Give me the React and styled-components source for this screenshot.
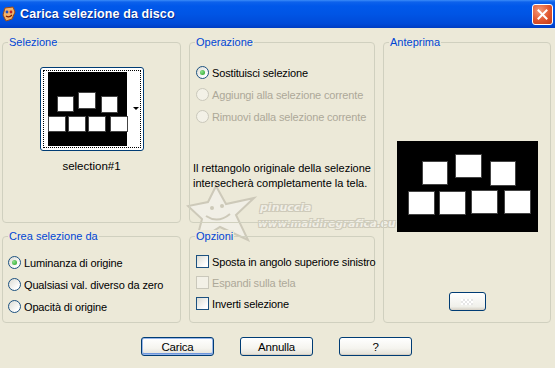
import styled, { createGlobalStyle } from 'styled-components'

const GlobalStyle = createGlobalStyle`
  html, body {
    margin: 0;
    padding: 0;
    background: #ece9d8;
  }
  body {
    font-family: "Liberation Sans", Arial, sans-serif;
    font-size: 11px;
    color: #000;
  }
`

const Window = styled.div`
  position: relative;
  width: 555px;
  height: 368px;
  background: #ece9d8;
  overflow: hidden;
  display: flex;
  flex-direction: column;
`

const TitleBar = styled.div`
  height: 28px;
  flex: none;
  display: flex;
  align-items: center;
  padding: 0 2px 0 2px;
  box-sizing: border-box;
  background: linear-gradient(#3b8cf8 0, #0d62ec 2px, #0058ea 6px, #0055e5 50%, #004ad8 85%, #003dc2 100%);
`

const TitleText = styled.span`
  flex: 1;
  margin-left: 4px;
  color: #fff;
  font-family: "Liberation Sans", Arial, sans-serif;
  font-weight: bold;
  font-size: 12.5px;
  letter-spacing: 0.1px;
  text-shadow: 1px 1px 0 #0a2a8a;
`

const CloseButton = styled.div`
  width: 21px;
  height: 21px;
  box-sizing: border-box;
  border: 1px solid #fff;
  border-radius: 3px;
  background: radial-gradient(circle at 35% 30%, #f39a7a 0, #e0562e 55%, #c23a16 100%);
  display: flex;
  align-items: center;
  justify-content: center;
  margin-top: 1px;
`

const Body = styled.div`
  position: relative;
  z-index: 1;
  display: grid;
  grid-template-columns: 179px 186px 168px;
  grid-template-rows: 187px 93px;
  column-gap: 8px;
  row-gap: 7px;
  padding: 8px 0 0 2px;
`

const Group = styled.fieldset`
  margin: 0;
  padding: 0;
  min-width: 0;
  border: 1px solid #d0d0bf;
  border-radius: 4px;
  box-sizing: border-box;
  grid-row: ${p => p.$span ? '1 / span 2' : 'auto'};
  grid-column: ${p => p.$col || 'auto'};
  display: flex;
  flex-direction: column;
  align-items: ${p => p.$center ? 'center' : 'stretch'};
`

const Legend = styled.legend`
  color: #0046d5;
  background: #ece9d8;
  padding: 0 1px;
  margin-left: 5px;
  font-size: 11px;
  line-height: 13px;
`

const ThumbButton = styled.div`
  position: relative;
  margin-top: 18px;
  width: 104px;
  height: 84px;
  box-sizing: border-box;
  border: 1px solid #003c74;
  border-radius: 3px;
  background: #fff;
  padding: 2px;
  display: flex;
`

const FocusRect = styled.div`
  flex: 1;
  border: 1px dotted #000;
  display: flex;
  padding: 1px 0 1px 4px;
`

const ThumbImage = styled.div`
  width: 79px;
  background: #000;
  position: relative;
`

const DropArrow = styled.div`
  position: absolute;
  right: 4px;
  top: 39px;
  width: 0;
  height: 0;
  border-left: 3px solid transparent;
  border-right: 3px solid transparent;
  border-top: 3px solid #000;
`

const Square = styled.div`
  position: absolute;
  background: #fff;
  box-shadow: 0 0 0 1px #444;
`

const Caption = styled.div`
  margin-top: 9px;
  font-size: 11.5px;
`

const OptionList = styled.div`
  display: flex;
  flex-direction: column;
  gap: ${p => p.$gap || 9}px;
  padding: ${p => p.$pad || '17px 0 0 6px'};
`

const OptionRow = styled.label`
  display: flex;
  align-items: center;
  height: 13px;
  gap: 3px;
  font-size: 11px;
  letter-spacing: -0.15px;
  color: ${p => p.$disabled ? '#aca899' : '#000'};
  white-space: nowrap;
`

const Radio = styled.span`
  flex: none;
  width: 13px;
  height: 13px;
  box-sizing: border-box;
  border-radius: 50%;
  border: 1px solid ${p => p.$disabled ? '#cac8bb' : '#1c5180'};
  background: ${p => p.$disabled ? '#f3f1e7' : 'linear-gradient(135deg, #dcdcd4 0%, #fff 80%)'};
  display: flex;
  align-items: center;
  justify-content: center;
  &::after {
    content: '';
    width: 5px;
    height: 5px;
    border-radius: 50%;
    background: ${p => p.$checked ? 'radial-gradient(circle at 35% 35%, #8de28d, #21a121)' : 'transparent'};
  }
`

const Check = styled.span`
  flex: none;
  width: 13px;
  height: 13px;
  box-sizing: border-box;
  border: 1px solid ${p => p.$disabled ? '#cac8bb' : '#1c5180'};
  background: ${p => p.$disabled ? '#f3f1e7' : 'linear-gradient(135deg, #dcdcd4 0%, #fff 80%)'};
`

const Note = styled.p`
  margin: 38px 0 0 3px;
  font-size: 11px;
  letter-spacing: 0;
  line-height: 15px;
  white-space: nowrap;
`

const Preview = styled.div`
  position: relative;
  margin-top: 92px;
  width: 141px;
  height: 91px;
  background: #000;
`

const SmallButton = styled.div`
  margin-top: 60px;
  width: 37px;
  height: 19px;
  box-sizing: border-box;
  border: 1px solid #003c74;
  border-radius: 3px;
  background: linear-gradient(#fff, #f0f0ea 80%, #d6d0c5);
  display: flex;
  align-items: center;
  justify-content: center;
`

const Checker = styled.div`
  width: 12px;
  height: 6px;
  background:
    linear-gradient(45deg, #e6e6e6 25%, transparent 25%, transparent 75%, #e6e6e6 75%),
    linear-gradient(45deg, #e6e6e6 25%, #fff 25%, #fff 75%, #e6e6e6 75%);
  background-size: 4px 4px;
  background-position: 0 0, 2px 2px;
`

const ButtonRow = styled.div`
  display: flex;
  justify-content: center;
  gap: 26px;
  margin-top: 14px;
  padding-right: 2px;
`

const PushButton = styled.button`
  width: 73px;
  height: 19px;
  box-sizing: border-box;
  border: 1px solid #003c74;
  border-radius: 3px;
  background: linear-gradient(#ffffff, #f5f4ef 60%, #e3e0d6 100%);
  font-family: "Liberation Sans", Arial, sans-serif;
  font-size: 11.5px;
  letter-spacing: -0.2px;
  color: #000;
  padding: 0;
  box-shadow: ${p => p.$default ? 'inset 0 0 0 1px #99b6e8, inset 0 -1px 0 1px #6e96dc' : 'inset 0 -1px 0 #d6d0c5'};
`

const Watermark = styled.div`
  position: absolute;
  z-index: 0;
  left: 186px;
  top: 184px;
  pointer-events: none;
  display: flex;
  align-items: flex-start;
`

const WatermarkText = styled.div`
  margin-left: -4px;
  margin-top: 17px;
  display: flex;
  flex-direction: column;
  gap: 3px;
  font-family: "DejaVu Sans", sans-serif;
  font-weight: bold;
  font-style: italic;
  color: #f1efe6;
  text-shadow: -1px -1px 0 #cdc9b9, 1px 1px 0 #cdc9b9, 1px -1px 0 #cdc9b9, -1px 1px 0 #cdc9b9;
`

const WmLine = styled.span`
  font-size: ${p => p.$size}px;
  letter-spacing: ${p => p.$space || 0}px;
  margin-left: ${p => p.$indent || 0}px;
`

const thumbSquares = [
  [10, 25, 15, 14], [31, 21, 16, 15], [54, 25, 15, 15],
  [1, 45, 16, 14], [21, 45, 16, 14], [41, 45, 16, 14], [63, 45, 16, 14],
]

const previewSquares = [
  [26, 21, 24, 22], [59, 14, 25, 22], [94, 21, 24, 23],
  [12, 51, 25, 22], [43, 51, 25, 22], [75, 50, 25, 22], [108, 50, 25, 22],
]

function AppIcon() {
  return (
    <svg width="14" height="16" viewBox="0 0 14 16">
      <path d="M3 2 L11 1 L13 6 L10 13 L4 15 L1 9 Z" fill="#f3b36a" stroke="#a04a10" strokeWidth="1" />
      <circle cx="5" cy="6" r="1.4" fill="#2050c0" />
      <circle cx="9" cy="6" r="1.4" fill="#c02020" />
      <path d="M4 10 Q7 12 10 9" stroke="#802000" strokeWidth="1.2" fill="none" />
    </svg>
  )
}

function StarMark() {
  return (
    <svg width="76" height="58" viewBox="0 0 76 58">
      <path d="M30 2 L40 20 L68 14 L50 31 L62 56 L34 43 L10 58 L16 35 L2 22 L22 18 Z"
        fill="#f1efe6" stroke="#cdc9b9" strokeWidth="2" />
      <circle cx="26" cy="24" r="2" fill="#cdc9b9" />
      <circle cx="36" cy="22" r="2" fill="#cdc9b9" />
      <path d="M20 32 Q32 40 44 30" stroke="#cdc9b9" strokeWidth="2" fill="none" />
    </svg>
  )
}

function App() {
  return (
    <Window>
      <GlobalStyle />
      <TitleBar>
        <AppIcon />
        <TitleText>Carica selezione da disco</TitleText>
        <CloseButton>
          <svg width="11" height="11" viewBox="0 0 11 11">
            <path d="M1.5 1.5 L9.5 9.5 M9.5 1.5 L1.5 9.5" stroke="#fff" strokeWidth="2" strokeLinecap="square" />
          </svg>
        </CloseButton>
      </TitleBar>

      <Body>
        <Group $center $col="1">
          <Legend>Selezione</Legend>
          <ThumbButton>
            <FocusRect>
              <ThumbImage>
                {thumbSquares.map(([x, y, w, h], i) => (
                  <Square key={i} style={{ left: x, top: y, width: w, height: h }} />
                ))}
              </ThumbImage>
            </FocusRect>
            <DropArrow />
          </ThumbButton>
          <Caption>selection#1</Caption>
        </Group>

        <Group $col="2">
          <Legend>Operazione</Legend>
          <OptionList $pad="17px 0 0 6px">
            <OptionRow><Radio $checked />Sostituisci selezione</OptionRow>
            <OptionRow $disabled><Radio $disabled />Aggiungi alla selezione corrente</OptionRow>
            <OptionRow $disabled><Radio $disabled />Rimuovi dalla selezione corrente</OptionRow>
          </OptionList>
          <Note>
            Il rettangolo originale della selezione<br />
            intersecherà completamente la tela.
          </Note>
        </Group>

        <Group $span $center $col="3">
          <Legend>Anteprima</Legend>
          <Preview>
            {previewSquares.map(([x, y, w, h], i) => (
              <Square key={i} style={{ left: x, top: y, width: w, height: h }} />
            ))}
          </Preview>
          <SmallButton><Checker /></SmallButton>
        </Group>

        <Group $col="1">
          <Legend>Crea selezione da</Legend>
          <OptionList $gap={9} $pad="13px 0 0 5px">
            <OptionRow><Radio $checked />Luminanza di origine</OptionRow>
            <OptionRow><Radio />Qualsiasi val. diverso da zero</OptionRow>
            <OptionRow><Radio />Opacità di origine</OptionRow>
          </OptionList>
        </Group>

        <Group $col="2">
          <Legend>Opzioni</Legend>
          <OptionList $gap={8} $pad="12px 0 0 6px">
            <OptionRow><Check />Sposta in angolo superiore sinistro</OptionRow>
            <OptionRow $disabled><Check $disabled />Espandi sulla tela</OptionRow>
            <OptionRow><Check />Inverti selezione</OptionRow>
          </OptionList>
        </Group>
      </Body>

      <ButtonRow>
        <PushButton $default>Carica</PushButton>
        <PushButton>Annulla</PushButton>
        <PushButton>?</PushButton>
      </ButtonRow>

      <Watermark>
        <StarMark />
        <WatermarkText>
          <WmLine $size={11} $indent={2}>pinuccia</WmLine>
          <WmLine $size={10.5}>www.maidiregrafica.eu</WmLine>
        </WatermarkText>
      </Watermark>
    </Window>
  )
}

export default App
